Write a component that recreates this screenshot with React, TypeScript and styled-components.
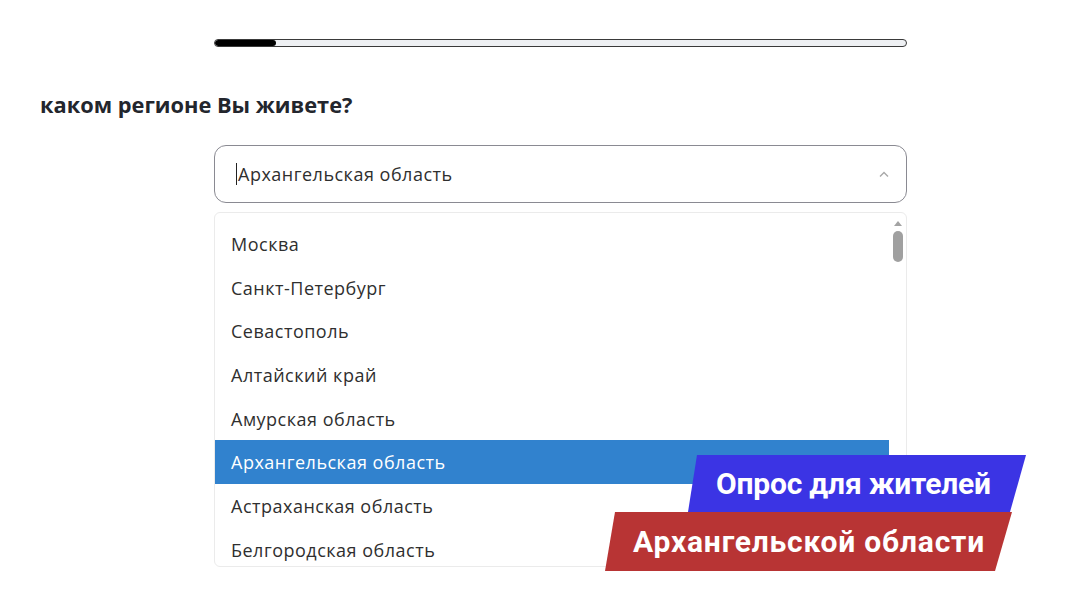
import React from "react";
import styled, { createGlobalStyle } from "styled-components";

const GlobalStyle = createGlobalStyle`
  html, body {
    margin: 0;
    padding: 0;
    background: #ffffff;
  }
  body {
    font-family: "Open Sans", Lato, sans-serif;
    color: #2b2b2b;
  }
`;

const Page = styled.div`
  position: relative;
  width: 1080px;
  height: 607px;
  overflow: hidden;
  padding-top: 39px;
  box-sizing: border-box;
`;

const Column = styled.div`
  margin-left: 214px;
  width: 693px;
`;

const Progress = styled.div`
  height: 8px;
  border: 1px solid #3a3a3a;
  border-radius: 5px;
  background: #eef0f3;
  box-sizing: border-box;
  overflow: hidden;
`;

const ProgressFill = styled.div`
  height: 100%;
  background: #000;
  border-radius: 4px;
`;

const Question = styled.h2`
  margin: 44px 0 0 40px;
  font-size: 21.8px;
  font-weight: 700;
  line-height: 28px;
  color: #23262d;
`;

const SelectBox = styled.div`
  margin-top: 26px;
  height: 58px;
  border: 1px solid #8a8a92;
  border-radius: 12px;
  box-sizing: border-box;
  display: flex;
  align-items: center;
  padding: 0 16px 0 21px;
  font-size: 18px;
  letter-spacing: 0.5px;
  color: #2f2f2f;
`;

const Caret = styled.span`
  display: inline-block;
  width: 1px;
  height: 22px;
  background: #222;
  margin-right: 1px;
`;

const SelectValue = styled.span`
  flex: 1;
`;

const DropList = styled.div`
  margin-top: 9px;
  height: 355px;
  border: 1px solid #ebebeb;
  border-radius: 6px;
  box-sizing: border-box;
  display: grid;
  grid-template-columns: 1fr 17px;
  overflow: hidden;
`;

const Items = styled.ul`
  list-style: none;
  margin: 0;
  padding: 9px 0 0;
`;

const Item = styled.li<{ $active?: boolean }>`
  height: 43.7px;
  display: flex;
  align-items: center;
  padding-left: 16px;
  font-size: 18px;
  letter-spacing: 0.5px;
  color: ${(p) => (p.$active ? "#ffffff" : "#2f2f2f")};
  background: ${(p) => (p.$active ? "#3182ce" : "transparent")};
`;

const Scrollbar = styled.div`
  display: flex;
  flex-direction: column;
  align-items: center;
  padding-top: 8px;
  gap: 5px;
`;

const ScrollArrow = styled.div`
  width: 0;
  height: 0;
  border-left: 4px solid transparent;
  border-right: 4px solid transparent;
  border-bottom: 5px solid #a3a3a3;
`;

const ScrollThumb = styled.div`
  width: 10px;
  height: 31px;
  border-radius: 5px;
  background: #a0a0a0;
`;

const Banner = styled.div`
  position: absolute;
  left: 605px;
  top: 455px;
  width: 425px;
  height: 116px;
  font-family: Roboto, "Noto Sans", sans-serif;
  font-weight: 700;
  color: #fff;
`;

const Stripe = styled.div<{
  $color: string;
  $clip: string;
  $top: number;
  $pad: number;
  $spacing: number;
}>`
  position: absolute;
  left: 0;
  right: 0;
  top: ${(p) => p.$top}px;
  height: ${(p) => (p.$top ? 59 : 57)}px;
  background: ${(p) => p.$color};
  clip-path: ${(p) => p.$clip};
  display: flex;
  align-items: center;
  padding-left: ${(p) => p.$pad}px;
  font-size: 30px;
  letter-spacing: ${(p) => p.$spacing}px;
  white-space: nowrap;
  box-sizing: border-box;
`;

const Chevron = () => (
  <svg width="12" height="8" viewBox="0 0 12 8">
    <path d="M2 6.5 L6 2.5 L10 6.5" fill="none" stroke="#a8a8a8" strokeWidth="1.4" />
  </svg>
);

const regions = [
  "Москва",
  "Санкт-Петербург",
  "Севастополь",
  "Алтайский край",
  "Амурская область",
  "Архангельская область",
  "Астраханская область",
  "Белгородская область",
];

export default function App() {
  return (
    <Page>
      <GlobalStyle />
      <Column>
        <Progress>
          <ProgressFill style={{ width: `${(61 / 693) * 100}%` }} />
        </Progress>
      </Column>
      <Question>каком регионе Вы живете?</Question>
      <Column>
        <SelectBox>
          <Caret />
          <SelectValue>Архангельская область</SelectValue>
          <Chevron />
        </SelectBox>
        <DropList>
          <Items>
            {regions.map((r) => (
              <Item key={r} $active={r === "Архангельская область"}>
                {r}
              </Item>
            ))}
          </Items>
          <Scrollbar>
            <ScrollArrow />
            <ScrollThumb />
          </Scrollbar>
        </DropList>
      </Column>
      <Banner>
        <Stripe
          $color="#3b34e4"
          $top={0}
          $pad={111}
          $spacing={-0.2}
          $clip="polygon(92px 0, 421px 0, 405px 100%, 83px 100%)"
        >
          Опрос для жителей
        </Stripe>
        <Stripe
          $color="#b83434"
          $top={57}
          $pad={28}
          $spacing={0.8}
          $clip="polygon(10px 0, 407px 0, 390px 100%, 0 100%)"
        >
          Архангельской области
        </Stripe>
      </Banner>
    </Page>
  );
}
